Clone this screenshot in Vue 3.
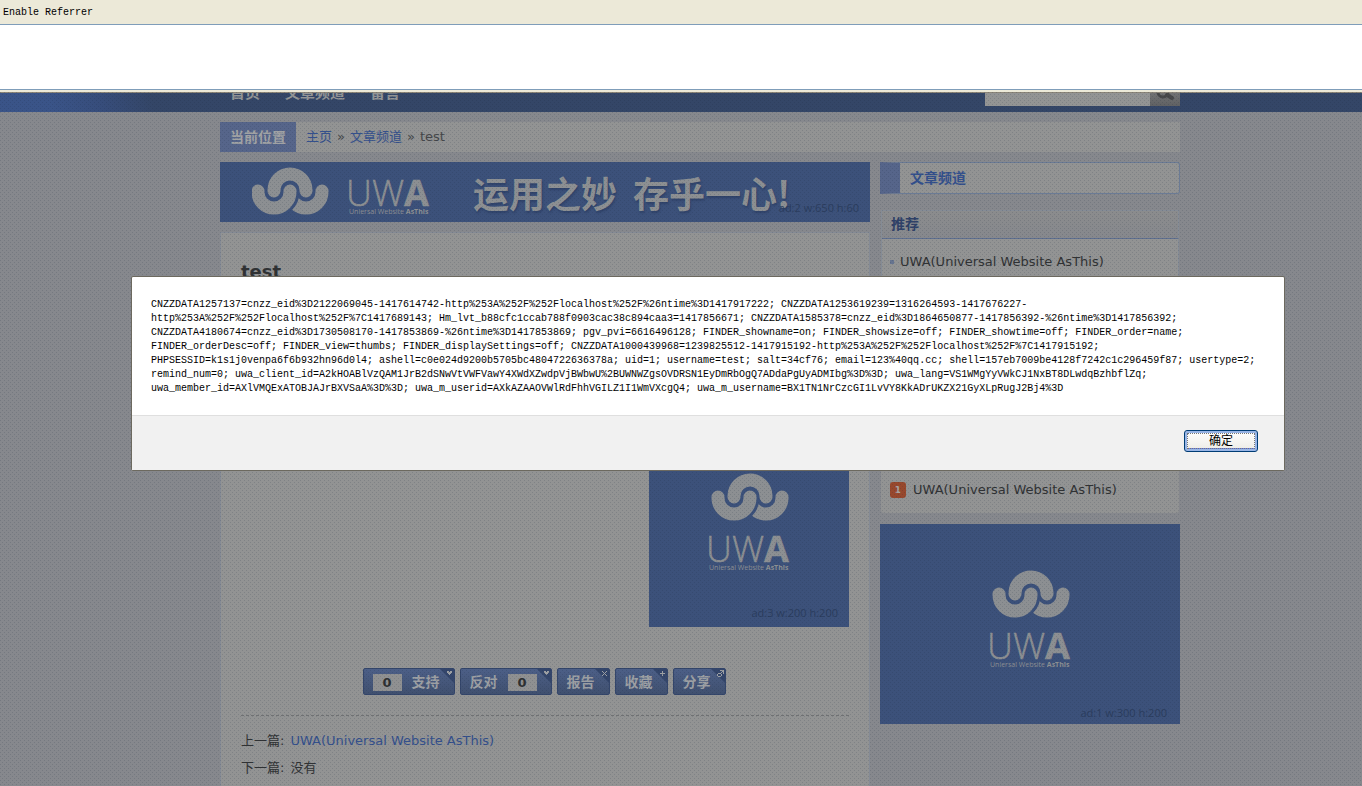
<script setup>
import { h } from 'vue'

const cookieLines = [
  'CNZZDATA1257137=cnzz_eid%3D2122069045-1417614742-http%253A%252F%252Flocalhost%252F%26ntime%3D1417917222; CNZZDATA1253619239=1316264593-1417676227-',
  'http%253A%252F%252Flocalhost%252F%7C1417689143; Hm_lvt_b88cfc1ccab788f0903cac38c894caa3=1417856671; CNZZDATA1585378=cnzz_eid%3D1864650877-1417856392-%26ntime%3D1417856392;',
  'CNZZDATA4180674=cnzz_eid%3D1730508170-1417853869-%26ntime%3D1417853869; pgv_pvi=6616496128; FINDER_showname=on; FINDER_showsize=off; FINDER_showtime=off; FINDER_order=name;',
  'FINDER_orderDesc=off; FINDER_view=thumbs; FINDER_displaySettings=off; CNZZDATA1000439968=1239825512-1417915192-http%253A%252F%252Flocalhost%252F%7C1417915192;',
  'PHPSESSID=k1s1j0venpa6f6b932hn96d0l4; ashell=c0e024d9200b5705bc4804722636378a; uid=1; username=test; salt=34cf76; email=123%40qq.cc; shell=157eb7009be4128f7242c1c296459f87; usertype=2;',
  'remind_num=0; uwa_client_id=A2kHOABlVzQAM1JrB2dSNwVtVWFVawY4XWdXZwdpVjBWbwU%2BUWNWZgsOVDRSN1EyDmRbOgQ7ADdaPgUyADMIbg%3D%3D; uwa_lang=VS1WMgYyVWkCJ1NxBT8DLwdqBzhbflZq;',
  'uwa_member_id=AXlVMQExATOBJAJrBXVSaA%3D%3D; uwa_m_userid=AXkAZAAOVWlRdFhhVGILZ1I1WmVXcgQ4; uwa_m_username=BX1TN1NrCzcGI1LvVY8KkADrUKZX21GyXLpRugJ2Bj4%3D',
]

const actions = [
  { label: '支持', count: 0, countFirst: true, icon: 'M1 1h2v1h1v-1h2v2h-1v1h-1v1h-1v-1h-1v-1h-1z' },
  { label: '反对', count: 0, icon: 'M1 1h2v1h1v-1h2v2h-1v1h-1v1h-1v-1h-1v-1h-1z' },
  { label: '报告', icon: 'M1 1h1v1h1v1h1v-1h1v-1h1v1h-1v1h-1v1h1v1h1v1h-1v-1h-1v-1h-1v1h-1v1h-1v-1h1v-1h1v-1h-1v-1h-1z' },
  { label: '收藏', icon: 'M3 1h1v2h2v1h-2v2h-1v-2h-2v-1h2z' },
  { label: '分享', icon: 'M3 0h4v4h-1v-2h-1v1h-1v-1h1v-1h-2zM1 3h3v1h1v2h-1v1h-3v-1h-1v-2h1zM1 4v2h3v-2z' },
]

const LogoMark = () =>
  h('g', { fill: 'none', 'stroke-width': 13, 'stroke-linecap': 'round' }, [
    h('path', { class: 'mark', d: 'M70 23v1a16 16 0 0 1-32 0' }),
    h('path', { class: 'mark-gap', 'stroke-width': 19, d: 'M6 23v1a16 16 0 0 0 32 0v-1' }),
    h('path', { class: 'mark', d: 'M22 23v-1a16 16 0 0 1 32 0v1' }),
    h('path', { class: 'mark', d: 'M6 23v1a16 16 0 0 0 32 0v-1' }),
  ])
const LogoWord = () => [
  h('text', { class: 'word', x: -3, y: 25 }, ['UW', h('tspan', { class: 'heavy' }, 'A')]),
  h('text', { class: 'tagline', x: 0, y: 33 }, ['Uniersal Website ', h('tspan', { class: 'heavy' }, 'AsThis')]),
]
</script>

<template>
  <div class="window">
    <div class="toolbar">Enable Referrer</div>
    <div class="blank-pane"></div>

    <div class="page">
      <header class="site-header">
        <div class="wrap header-row">
          <nav class="nav">
            <a href="#">首页</a><a href="#">文章频道</a><a href="#">留言</a>
          </nav>
          <form class="search" @submit.prevent>
            <input type="text" aria-label="搜索" />
            <button type="submit" aria-label="搜索">
              <svg width="20" height="20" viewBox="0 0 20 20"><circle cx="8" cy="8" r="5" fill="none" stroke="#47484a" stroke-width="3" /><path d="M12 11l5 3" stroke="#47484a" stroke-width="4" stroke-linecap="round" /></svg>
            </button>
          </form>
        </div>
      </header>

      <div class="wrap crumbs">
        <strong>当前位置</strong>
        <p><a href="#">主页</a><span>»</span><a href="#">文章频道</a><span>»</span>test</p>
      </div>

      <div class="wrap columns">
        <main>
          <div class="ad banner">
            <svg class="logo" width="190" height="60" viewBox="0 0 190 60">
              <g transform="translate(0 6)"><LogoMark /></g>
              <g transform="translate(97 19)"><LogoWord /></g>
            </svg>
            <div class="slogan"><span>运用之妙</span><span>存乎一心!</span></div>
            <small>ad:2 w:650 h:60</small>
          </div>
          <article>
            <h1>test</h1>
            <div class="ad square">
              <svg class="logo" width="90" height="104" viewBox="0 0 90 104">
                <g transform="translate(8 1)"><LogoMark /></g>
                <g transform="translate(5 64)"><LogoWord /></g>
              </svg>
              <small>ad:3 w:200 h:200</small>
            </div>
            <div class="actions">
              <button v-for="a in actions" :key="a.label" type="button" :class="{ voting: a.count !== undefined, reversed: a.count !== undefined && !a.countFirst }">
                <span v-if="a.count !== undefined" class="count">{{ a.count }}</span>
                <span>{{ a.label }}</span>
                <svg width="14" height="14" viewBox="0 0 14 14"><path class="fold" d="M0 0h14v14z" /><path class="glyph" fill-rule="evenodd" transform="translate(6 1)" :d="a.icon" /></svg>
              </button>
            </div>
            <div class="siblings">
              <p>上一篇:<a href="#">UWA(Universal Website AsThis)</a></p>
              <p>下一篇:<span>没有</span></p>
            </div>
          </article>
        </main>

        <aside>
          <h2 class="channel">文章频道</h2>
          <section class="panel recommended">
            <h3>推荐</h3>
            <ul><li>UWA(Universal Website AsThis)</li></ul>
          </section>
          <section class="panel ranking">
            <ol><li><b>1</b>UWA(Universal Website AsThis)</li></ol>
          </section>
          <div class="ad wide">
            <svg class="logo" width="90" height="104" viewBox="0 0 90 104">
              <g transform="translate(8 1)"><LogoMark /></g>
              <g transform="translate(5 64)"><LogoWord /></g>
            </svg>
            <small>ad:1 w:300 h:200</small>
          </div>
        </aside>
      </div>
    </div>

    <div class="dialog" role="alertdialog" aria-modal="true">
      <div class="message"><div v-for="line in cookieLines" :key="line">{{ line }}</div></div>
      <footer><button type="button">确定</button></footer>
    </div>
  </div>
</template>

<style>
body { background: #84868b; overflow: hidden; }
</style>

<style scoped>
* { box-sizing: border-box; }
h1, h2, h3, p, ul, ol { margin: 0; padding: 0; list-style: none; }
a { color: #34508c; text-decoration: none; }
button { cursor: pointer; }

.window {
  position: relative;
  display: flex;
  flex-direction: column;
  height: 100vh;
  overflow: hidden;
  font: 13px/20px "DejaVu Sans", "Noto Sans CJK SC", sans-serif;
  color: #303234;
}
.toolbar {
  flex: none;
  height: 25px;
  padding: 0 3px;
  background: #ece9d8;
  border-bottom: 1px solid #7f9db9;
  color: #000;
  font: 10px/26px "Liberation Mono", monospace;
}
.blank-pane {
  flex: none;
  height: 65px;
  background: #fff;
  border-bottom: 1px solid #7f9db9;
}
.page {
  position: relative;
  flex: 1;
  min-height: 0;
  overflow: hidden;
  border-top: 2px solid #ece9d8;
  background: #86888d;
}
/* fine dotted veil over the dimmed page */
.page::after {
  content: "";
  position: absolute;
  inset: 0;
  pointer-events: none;
  background-image:
    conic-gradient(at 1px 1px, transparent 75%, rgba(20, 30, 50, 0.14) 0),
    conic-gradient(at 1px 1px, transparent 75%, rgba(20, 30, 50, 0.14) 0);
  background-size: 4px 4px;
  background-position: 0 0, 2px 2px;
}
.wrap { width: 960px; margin-left: 220px; }

.site-header {
  height: 20px;
  overflow: hidden;
  border-top: 1px solid #8b8579;
  background: linear-gradient(75deg, #3a5488 0, #3a5488 50px, #374d7b 100px, #344667 150px);
}
.header-row {
  display: flex;
  justify-content: space-between;
  align-items: flex-end;
  height: 13px;
}
.nav { display: flex; gap: 25px; padding-left: 10px; }
.nav a { height: 26px; color: #929495; font-size: 15px; font-weight: bold; line-height: 26px; }
.search { display: flex; height: 24px; }
.search input { width: 165px; border: 0; padding: 0 6px; background: #939494; }
.search button {
  display: flex;
  justify-content: center;
  align-items: center;
  width: 30px;
  padding: 0;
  border: 0;
  background: linear-gradient(#7f8081, #606163);
}

.crumbs {
  display: flex;
  align-items: center;
  height: 30px;
  margin-top: 10px;
  background: #929393;
  color: #45474a;
}
.crumbs strong {
  padding: 0 10px;
  background: #56658a;
  color: #a0a2a4;
  font-size: 14px;
  line-height: 30px;
}
.crumbs p { padding-left: 10px; line-height: 32px; }
.crumbs span { margin: 0 5px; }

.columns { display: grid; grid-template-columns: 650px 300px; gap: 10px; margin-top: 10px; }

.ad { position: relative; overflow: hidden; background: #3c517a; }
.ad small {
  position: absolute;
  right: 11px;
  bottom: 5px;
  color: #2b3d5e;
  font: 11px/18px "Open Sans", "Noto Sans", sans-serif;
}
.logo { display: block; }
.logo :deep(.mark) { stroke: #8c8f92; }
.logo :deep(.mark-gap) { stroke: #3c517a; }
.logo :deep(text) { fill: #8c8f92; font-family: "Open Sans", "Noto Sans", sans-serif; }
.logo :deep(.word) {
  font-size: 36px;
  font-weight: 300;
  stroke: #8c8f92;
  stroke-width: 0.5px;
}
.logo :deep(.tagline) { font-size: 7px; }
.logo :deep(.heavy) { font-weight: 700; }

.banner { display: flex; align-items: center; height: 60px; padding-left: 32px; }
.slogan {
  display: flex;
  gap: 16px;
  padding-left: 31px;
  color: #8c8f92;
  font: bold 36px/60px "Noto Sans CJK SC", sans-serif;
  white-space: nowrap;
  text-shadow: 1px 2px 2px #30436a;
}
article {
  margin: 10px 0 0;
  padding: 29px 20px 20px;
  border: 1px solid #858b95;
  border-bottom: 0;
  background: #929393;
}
h1 { font-size: 18px; line-height: 20px; }
.square {
  display: flex;
  justify-content: center;
  width: 200px;
  height: 200px;
  margin: 145px 0 0 auto;
  padding-top: 46px;
}
.wide { display: flex; justify-content: center; height: 200px; margin-top: 11px; padding-top: 46px; }
.wide small { right: 13px; bottom: 2px; }

.actions { display: flex; justify-content: center; gap: 5px; margin: 41px 2px 0 0; }
.actions button {
  position: relative;
  display: flex;
  align-items: center;
  gap: 10px;
  width: 53px;
  height: 27px;
  padding: 1px 0 0 9px;
  border: 1px solid #34466b;
  border-radius: 2px;
  background: linear-gradient(#4c5f87, #40506f);
  color: #9c9fa3;
  font: bold 14px/25px "DejaVu Sans", "Noto Sans CJK SC", sans-serif;
}
.actions .voting { width: 92px; }
.actions .reversed { flex-direction: row-reverse; justify-content: flex-end; }
.actions .count {
  width: 29px;
  background: #8f9091;
  color: #2e3032;
  font-size: 13px;
  line-height: 17px;
}
.actions svg { position: absolute; top: 0; right: 0; }
.fold { fill: #34466b; }
.glyph { fill: #9c9fa3; }

.siblings { margin-top: 20px; padding-top: 11px; border-top: 1px dashed #6f7173; }
.siblings p { display: flex; gap: 6px; line-height: 27px; }

.channel {
  height: 32px;
  padding-left: 10px;
  border: 1px solid #6b7b95;
  border-left: 20px solid #56658a;
  border-radius: 0 3px 3px 0;
  background: #929393;
  color: #34508c;
  font-size: 14px;
  line-height: 30px;
}
.panel { margin: 0 1px; background: #929393; }
.recommended { height: 170px; margin-top: 16px; border: 1px solid #858c96; }
h3 {
  height: 28px;
  padding-left: 9px;
  border-bottom: 1px solid #5f7090;
  background: linear-gradient(#8b8c8d, #86888d);
  color: #2f4168;
  font-size: 14px;
  line-height: 27px;
}
.recommended li { display: flex; align-items: center; gap: 6px; padding: 13px 8px; }
.recommended li::before { content: ""; width: 4px; height: 4px; background: #66748f; }
.ranking {
  display: flex;
  align-items: flex-end;
  height: 123px;
  margin-top: 10px;
  padding: 0 9px 13px;
  border-radius: 0 0 3px 3px;
}
.ranking li { display: flex; align-items: center; gap: 7px; }
.ranking b {
  width: 16px;
  border-radius: 3px;
  background: #97482d;
  color: #a9a29f;
  font-size: 9px;
  line-height: 16px;
  text-align: center;
}

.dialog {
  position: absolute;
  top: 276px;
  left: 131px;
  right: 77px;
  border: 1px solid #6c695f;
  border-radius: 2px;
  background: #fff;
  color: #000;
}
.message {
  padding: 21px 20px 19px 19px;
  font: 10px/14px "Liberation Mono", monospace;
  white-space: nowrap;
}
.dialog footer {
  display: flex;
  justify-content: flex-end;
  padding: 14px 26px 18px;
  border-top: 1px solid #dfdfdf;
  background: #f1f1f1;
}
.dialog footer button {
  width: 74px;
  height: 22px;
  padding: 0;
  border: 1px solid #003c74;
  border-radius: 3px;
  background: linear-gradient(#fff, #ecebe5);
  box-shadow: inset 0 0 0 2px #98b5e6, inset 0 -2px 0 1px #6982ee;
  outline: 1px dotted #777;
  outline-offset: -4px;
  color: #000;
  font: 12px/18px "Liberation Sans", "Noto Sans CJK SC", sans-serif;
}
</style>
